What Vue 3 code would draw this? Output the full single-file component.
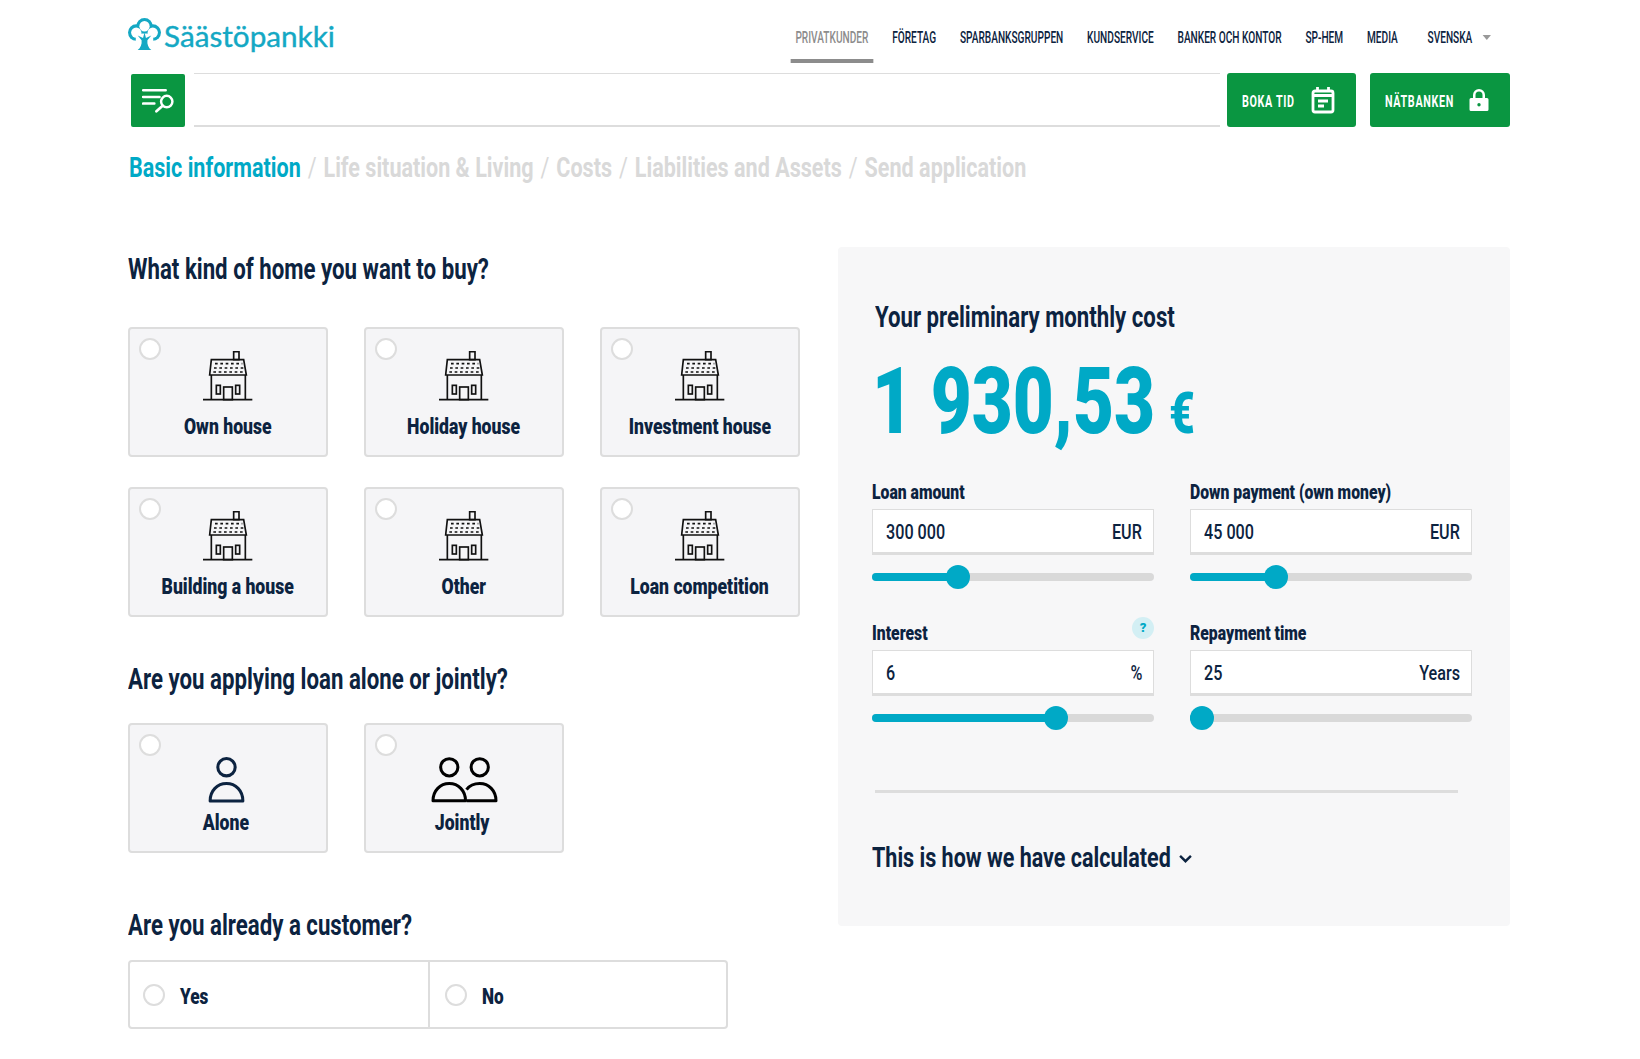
<template>
  <div class="page">
    <header class="top">
      <a class="logo">
        <svg class="tree" viewBox="0 0 34 34">
          <g fill="#14a8c4">
            <circle cx="8.500" cy="15" r="8.500" />
            <circle cx="25.500" cy="15" r="8.500" />
            <circle cx="17" cy="8.500" r="8.500" />
          </g>
          <g fill="#fff">
            <circle cx="8.500" cy="15" r="5.300" />
            <circle cx="25.500" cy="15" r="5.300" />
            <circle cx="17" cy="8.500" r="5.300" />
            <path d="M8 16h18v8H8z" />
          </g>
          <path d="M10 33c3-2 4.500-6 4-10l-4-5 5.500 2.500L17 15l1.500 5.500L24 18l-4 5c-.5 4 1 8 4 10z" fill="#14a8c4" />
        </svg>
        <span>Säästöpankki</span>
      </a>
      <div class="nav-wrap">
        <nav class="nav">
          <a v-for="item in navItems" :key="item" :class="{ active: item === 'PRIVATKUNDER' }">{{ item }}</a>
          <a class="lang">SVENSKA <i class="caret"></i></a>
        </nav>
      </div>
    </header>

    <div class="toolbar">
      <button class="search-btn" aria-label="Sök">
        <svg viewBox="0 0 32 24" width="33" height="25" fill="none" stroke="#fff" stroke-width="2.400" stroke-linecap="round">
          <path d="M1 2h22M1 8.500h16M1 15h11" />
          <circle cx="24" cy="13" r="5.500" />
          <path d="M20 17l-6 5.500" stroke-width="2.600" />
        </svg>
      </button>
      <div class="search-field"></div>
      <a class="green-btn boka">
        <span>BOKA TID</span>
        <svg viewBox="0 0 24 28" width="24" height="28" fill="none" stroke="#fff" stroke-width="2.800">
          <rect x="2" y="5" width="20" height="21" rx="2" />
          <path d="M2 9.500h20M6.500 1v5M17.500 1v5" />
          <path d="M7 15h10M7 20h6" />
        </svg>
      </a>
      <a class="green-btn natbank">
        <span>NÄTBANKEN</span>
        <svg viewBox="0 0 20 24" width="20" height="24" fill="#fff">
          <path d="M4 10V7a6 6 0 0 1 12 0v3h-2.500V7a3.500 3.500 0 0 0-7 0v3z" />
          <path fill-rule="evenodd" d="M2 10h16a1.500 1.500 0 0 1 1.500 1.500v10A1.500 1.500 0 0 1 18 23H2a1.500 1.500 0 0 1-1.500-1.500v-10A1.500 1.500 0 0 1 2 10zm8 5a1.700 1.700 0 1 0 0 3.400 1.700 1.700 0 0 0 0-3.400z" />
        </svg>
      </a>
    </div>

    <div class="steps">
      <template v-for="(step, i) in steps" :key="step">
        <span v-if="i" class="sep">/</span>
        <span :class="{ current: i === 0 }">{{ step }}</span>
      </template>
    </div>

    <main class="content">
      <section class="form">
        <h2 class="first">What kind of home you want to buy?</h2>
        <div class="cards homes">
          <label v-for="home in homes" :key="home" class="card">
            <span class="radio"></span>
            <svg class="house" viewBox="0 0 150 150" fill="none" stroke="#111" stroke-width="5">
              <rect x="92" y="2" width="16" height="24" />
              <path d="M25 26h97l8 46H20zM25 72v74M127 72v74" />
              <path d="M36 38h82M33 51h88M31 63h92" stroke-width="5" stroke-dasharray="8 8" />
              <rect x="62" y="108" width="26" height="38" />
              <rect x="40" y="103" width="12" height="26" />
              <rect x="98" y="103" width="12" height="26" />
              <path d="M0 146h148" />
            </svg>
            <strong>{{ home }}</strong>
          </label>
        </div>

        <h2>Are you applying loan alone or jointly?</h2>
        <div class="cards applicants">
          <label class="card people alone">
            <span class="radio"></span>
            <svg viewBox="0 0 36 46" width="37" height="47" fill="none" stroke="#0c2340" stroke-width="3">
              <circle cx="18" cy="10" r="8.500" />
              <path d="M2 43c0-10 7-17 16-17s16 7 16 17z" stroke-linejoin="round" />
            </svg>
            <strong>Alone</strong>
          </label>
          <label class="card people jointly">
            <span class="radio"></span>
            <svg viewBox="0 0 66 46" width="67" height="47" fill="none" stroke="#000" stroke-width="3">
              <circle cx="18" cy="10" r="8.500" />
              <circle cx="48" cy="10" r="8.500" />
              <path d="M2 43c0-10 7-17 16-17s16 7 16 17z" stroke-linejoin="round" />
              <path d="M35 43h29c0-10-7-17-16-17-6 0-10 2-13 6" stroke-linejoin="round" />
            </svg>
            <strong>Jointly</strong>
          </label>
        </div>

        <h2>Are you already a customer?</h2>
        <div class="yesno">
          <label><span class="radio"></span><strong>Yes</strong></label>
          <label><span class="radio"></span><strong>No</strong></label>
        </div>
      </section>

      <aside class="panel">
        <h3>Your preliminary monthly cost</h3>
        <div class="amount">1 930,53<small>€</small></div>
        <div class="fields">
          <div v-for="f in fields" :key="f.label" class="field">
            <div class="label">
              <span>{{ f.label }}</span>
              <span v-if="f.help" class="help">?</span>
            </div>
            <div class="input"><span>{{ f.value }}</span><span class="unit">{{ f.unit }}</span></div>
            <div class="slider">
              <div class="fill" :style="{ width: f.pos + '%' }"></div>
              <div class="thumb" :style="{ left: f.pos + '%' }"></div>
            </div>
          </div>
        </div>
        <hr />
        <div class="calc">
          <span>This is how we have calculated</span>
          <svg viewBox="0 0 12 8" width="13" height="9" fill="none" stroke="#0c2340" stroke-width="2.200">
            <path d="M1 1.500l5 5 5-5" />
          </svg>
        </div>
      </aside>
    </main>
  </div>
</template>

<script setup>
const navItems = ['PRIVATKUNDER', 'FÖRETAG', 'SPARBANKSGRUPPEN', 'KUNDSERVICE', 'BANKER OCH KONTOR', 'SP-HEM', 'MEDIA']
const steps = ['Basic information', 'Life situation & Living', 'Costs', 'Liabilities and Assets', 'Send application']
const homes = ['Own house', 'Holiday house', 'Investment house', 'Building a house', 'Other', 'Loan competition']
const fields = [
  { label: 'Loan amount', value: '300 000', unit: 'EUR', pos: 30.500 },
  { label: 'Down payment (own money)', value: '45 000', unit: 'EUR', pos: 30.500 },
  { label: 'Interest', value: '6', unit: '%', pos: 65.400, help: true },
  { label: 'Repayment time', value: '25', unit: 'Years', pos: 4.100 }
]
</script>

<style>
html, body {
  background: #fff;
}
</style>

<style scoped>
/* no condensed family is installed, so the headline text is Roboto squeezed with scaleX */
.page {
  width: 1382px;
  margin-left: 128px;
  height: 1059px;
  overflow: hidden;
  color: #0c2340;
  font-family: Roboto, "Liberation Sans", sans-serif;
}

.top {
  display: flex;
  height: 73px;
}

.logo {
  display: flex;
  flex: none;
  align-items: center;
  gap: 3px;
  height: 73px;
  color: #14a8c4;
  font: 400 29.700px Lato, sans-serif;
  -webkit-text-stroke: 0.4px #14a8c4;
}

.tree {
  width: 33px;
  height: 33px;
  margin-top: -5px;
}

.logo span {
  margin-top: -2px;
}

.nav-wrap {
  flex: 1;
  display: flex;
  justify-content: flex-end;
  min-width: 0;
}

.nav {
  flex: none;
  display: flex;
  align-items: flex-start;
  margin-right: 19px;
  font-size: 17px;
  font-weight: 500;
  line-height: 20px;
  transform: scaleX(0.595);
  transform-origin: right top;
}

.nav a {
  display: block;
  height: 32px;
  padding: 27px 8px 0;
  margin-right: 24px;
  white-space: nowrap;
}

.nav a.active {
  color: #8c8c8c;
  border-bottom: 4px solid #8c8c8c;
}

.nav .lang {
  margin: 0 0 0 10px;
  padding-right: 0;
}

.caret {
  display: inline-block;
  margin-left: 13px;
  border: 7px solid transparent;
  border-top: 5px solid #999;
  border-bottom: 0;
  vertical-align: 3px;
}

.toolbar {
  display: flex;
  align-items: stretch;
  height: 54px;
}

.search-btn {
  width: 54px;
  margin: 1px 9px 0 3px;
  padding: 0;
  border: 0;
  border-radius: 2px;
  background: #0a9641;
  display: flex;
  align-items: center;
  justify-content: center;
}

.search-field {
  flex: 1;
  border-top: 1px solid #ddd;
  border-bottom: 2px solid #ddd;
}

.green-btn {
  display: flex;
  align-items: center;
  margin-left: 7px;
  padding: 0 21px 0 15px;
  background: #0a9641;
  border-radius: 3px;
  color: #fff;
  font-size: 16px;
  font-weight: 700;
  letter-spacing: 1px;
}

.green-btn span {
  flex: 1;
  width: 0;
  padding-top: 2px;
  white-space: nowrap;
  transform: scaleX(0.67);
  transform-origin: left center;
}

.boka {
  box-sizing: border-box;
  width: 129px;
}

.natbank {
  box-sizing: border-box;
  width: 140px;
  margin-left: 14px;
}

.steps {
  display: flex;
  gap: 9px;
  margin: 26px 0 0 1px;
  color: #d9d9d9;
  font-size: 28px;
  font-weight: 700;
  line-height: 30px;
  white-space: nowrap;
  transform: scaleX(0.77);
  transform-origin: left center;
}

.steps .current {
  color: #00a9c6;
}

.steps .sep {
  font-weight: 400;
}

.content {
  display: grid;
  grid-template-columns: 710px 672px;
  margin-top: 64px;
}

h2 {
  margin: 0;
  font-size: 29px;
  font-weight: 700;
  line-height: 36px;
  white-space: nowrap;
  transform: scaleX(0.767);
  transform-origin: left center;
}

h2.first {
  margin-top: 4px;
}

.cards {
  display: grid;
  grid-template-columns: repeat(3, 200px);
  column-gap: 36px;
  row-gap: 30px;
}

.homes {
  margin: 40px 0 44px;
}

.applicants {
  margin: 26px 0 54px;
}

.card {
  position: relative;
  box-sizing: border-box;
  height: 130px;
  display: flex;
  flex-direction: column;
  align-items: center;
  padding-top: 22px;
  background: #f5f5f7;
  border: 2px solid #ddd;
  border-radius: 4px;
}

.house {
  width: 50px;
  height: 50px;
}

.card strong {
  margin-top: 13px;
  font-size: 22px;
  font-weight: 900;
  line-height: 26px;
  white-space: nowrap;
  transform: scaleX(0.8);
}

.people {
  padding-top: 32px;
}

.people strong {
  margin-top: 6px;
}

.alone {
  padding-right: 4px;
}

.jointly strong {
  margin-right: 4px;
}

.radio {
  display: block;
  flex: none;
  box-sizing: border-box;
  width: 22px;
  height: 22px;
  border: 2px solid #ddd;
  border-radius: 50%;
  background: #fff;
}

.card .radio {
  position: absolute;
  top: 9px;
  left: 9px;
}

.yesno {
  display: grid;
  grid-template-columns: 298px 298px;
  box-sizing: border-box;
  width: 600px;
  height: 69px;
  margin-top: 17px;
  border: 2px solid #ddd;
  border-radius: 4px;
}

.yesno label {
  display: flex;
  align-items: center;
  gap: 15px;
  padding-left: 13px;
}

.yesno strong {
  padding-top: 3px;
  font-size: 22px;
  font-weight: 900;
  transform: scaleX(0.78);
  transform-origin: left center;
}

.yesno label + label {
  padding-left: 15px;
  border-left: 2px solid #ddd;
}

.panel {
  box-sizing: border-box;
  height: 679px;
  padding: 52px 35px 0 34px;
  background: #f7f7f8;
  border-radius: 4px;
}

h3 {
  margin: 0 0 0 3px;
  font-size: 29px;
  font-weight: 700;
  line-height: 36px;
  white-space: nowrap;
  transform: scaleX(0.765);
  transform-origin: left center;
}

.amount {
  margin: 17px 0 0;
  color: #00a9c6;
  font-size: 92px;
  font-weight: 900;
  line-height: 100px;
  white-space: nowrap;
  transform: scaleX(0.77);
  transform-origin: left center;
}

.amount small {
  margin-left: 18px;
  font-size: 58px;
}

.fields {
  display: grid;
  grid-template-columns: 282px 282px;
  column-gap: 36px;
  row-gap: 39px;
  margin-top: 16px;
}

.label {
  display: flex;
  justify-content: space-between;
  align-items: flex-start;
  height: 30px;
  font-size: 21px;
  font-weight: 900;
  line-height: 26px;
  white-space: nowrap;
}

.label > span:first-child {
  transform: scaleX(0.75);
  transform-origin: left center;
}

.help {
  width: 22px;
  height: 22px;
  margin-top: -3px;
  border-radius: 50%;
  background: #d3eff4;
  color: #00a9c6;
  font-size: 13px;
  line-height: 22px;
  text-align: center;
}

.input {
  display: flex;
  justify-content: space-between;
  align-items: center;
  box-sizing: border-box;
  height: 46px;
  padding: 2px 11px 0 13px;
  background: #fff;
  border: 1px solid #ddd;
  border-bottom: 3px solid #ddd;
  font-size: 21px;
  font-weight: 500;
}

.input span {
  transform: scaleX(0.77);
  transform-origin: left center;
}

.input .unit {
  transform-origin: right center;
}

.slider {
  position: relative;
  height: 8px;
  margin-top: 18px;
  border-radius: 4px;
  background: #d9d9d9;
}

.fill {
  height: 100%;
  border-radius: 4px;
  background: #00a9c6;
}

.thumb {
  position: absolute;
  top: -8px;
  width: 24px;
  height: 24px;
  margin-left: -12px;
  border-radius: 50%;
  background: #00a9c6;
}

hr {
  height: 3px;
  margin: 68px 17px 0 3px;
  border: 0;
  background: #ddd;
}

.calc {
  display: flex;
  align-items: center;
  gap: 9px;
  margin-top: 48px;
  font-size: 27px;
  font-weight: 700;
  line-height: 34px;
}

.calc span {
  flex: none;
  width: 298px;
  white-space: nowrap;
  transform: scaleX(0.797);
  transform-origin: left center;
}
</style>
